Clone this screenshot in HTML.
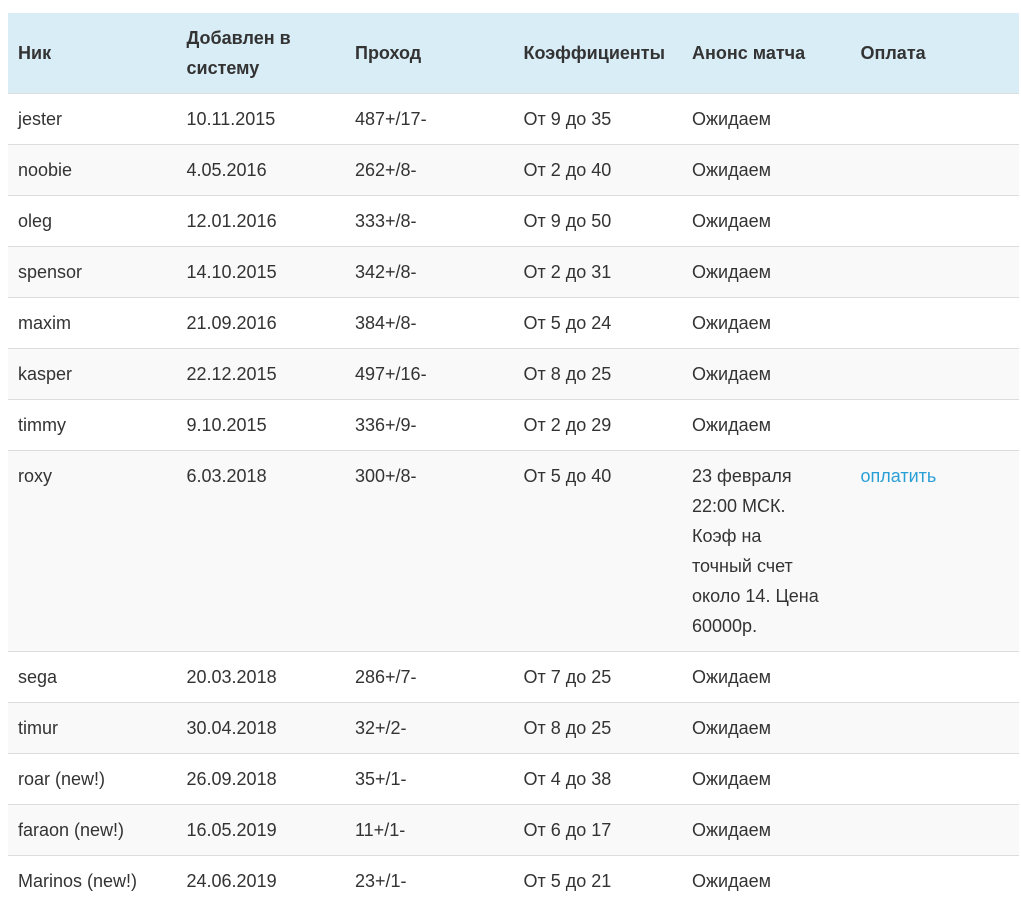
<!DOCTYPE html>
<html><head><meta charset="utf-8"><style>
body{margin:0;background:#fff;font-family:"Liberation Sans","Noto Sans CJK SC",sans-serif;color:#333;font-size:18px}
table{position:absolute;left:8px;top:13px;width:1011px;border-collapse:collapse;table-layout:fixed}
td,th{padding:10px 10px;line-height:30px;text-align:left;vertical-align:top;border-top:1px solid #ddd}
th{background:#d9edf7;font-weight:bold;vertical-align:middle;border-top:none;border-bottom:1px solid #ddd;height:60px;padding:10px}
tbody tr:nth-child(even) td{background:#f9f9f9}
a{color:#2a9fd6;text-decoration:none}
</style></head><body>
<table>
<colgroup><col style="width:168.5px"><col style="width:168.5px"><col style="width:168.5px"><col style="width:168.5px"><col style="width:168.5px"><col></colgroup>
<thead><tr><th>Ник</th><th>Добавлен в систему</th><th>Проход</th><th>Коэффициенты</th><th>Анонс матча</th><th>Оплата</th></tr></thead>
<tbody>
<tr><td>jester</td><td>10.11.2015</td><td>487+/17-</td><td>От 9 до 35</td><td>Ожидаем</td><td></td></tr>
<tr><td>noobie</td><td>4.05.2016</td><td>262+/8-</td><td>От 2 до 40</td><td>Ожидаем</td><td></td></tr>
<tr><td>oleg</td><td>12.01.2016</td><td>333+/8-</td><td>От 9 до 50</td><td>Ожидаем</td><td></td></tr>
<tr><td>spensor</td><td>14.10.2015</td><td>342+/8-</td><td>От 2 до 31</td><td>Ожидаем</td><td></td></tr>
<tr><td>maxim</td><td>21.09.2016</td><td>384+/8-</td><td>От 5 до 24</td><td>Ожидаем</td><td></td></tr>
<tr><td>kasper</td><td>22.12.2015</td><td>497+/16-</td><td>От 8 до 25</td><td>Ожидаем</td><td></td></tr>
<tr><td>timmy</td><td>9.10.2015</td><td>336+/9-</td><td>От 2 до 29</td><td>Ожидаем</td><td></td></tr>
<tr><td>roxy</td><td>6.03.2018</td><td>300+/8-</td><td>От 5 до 40</td><td>23 февраля<br>22:00 МСК.<br>Коэф на<br>точный счет<br>около 14. Цена<br>60000р.</td><td><a>оплатить</a></td></tr>
<tr><td>sega</td><td>20.03.2018</td><td>286+/7-</td><td>От 7 до 25</td><td>Ожидаем</td><td></td></tr>
<tr><td>timur</td><td>30.04.2018</td><td>32+/2-</td><td>От 8 до 25</td><td>Ожидаем</td><td></td></tr>
<tr><td>roar (new!)</td><td>26.09.2018</td><td>35+/1-</td><td>От 4 до 38</td><td>Ожидаем</td><td></td></tr>
<tr><td>faraon (new!)</td><td>16.05.2019</td><td>11+/1-</td><td>От 6 до 17</td><td>Ожидаем</td><td></td></tr>
<tr><td>Marinos (new!)</td><td>24.06.2019</td><td>23+/1-</td><td>От 5 до 21</td><td>Ожидаем</td><td></td></tr>
</tbody></table>
</body></html>
